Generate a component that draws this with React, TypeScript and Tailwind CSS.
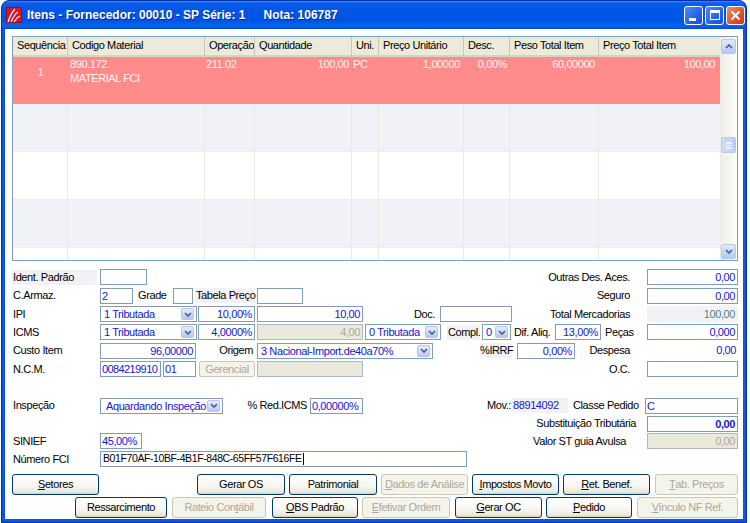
import React from 'react';

type P = { className?: string; children?: React.ReactNode };

// label text, no border
const Lbl = ({ className = '', children }: P) => (
  <div className={`h-[15px] shrink-0 whitespace-nowrap leading-[15px] ${className}`}>{children}</div>
);

// edit box
const Field = ({ className = '', children, right, disabled }: P & { right?: boolean; disabled?: boolean }) => (
  <div
    className={`h-[16px] shrink-0 overflow-hidden whitespace-nowrap border leading-[14px] ${
      disabled ? 'border-[#a9b8cc] bg-[#ebe9db] text-[#aca899]' : 'border-[#7f9db9] bg-white text-[#1616d0]'
    } ${right ? 'pr-[2px] text-right' : 'pl-[1px]'} ${className}`}
  >
    {children}
  </div>
);

const Chevron = ({ up }: { up?: boolean }) => (
  <svg width="8" height="5" viewBox="0 0 8 5">
    <path d={up ? 'M1 4l3-3 3 3' : 'M1 1l3 3 3-3'} fill="none" stroke="#4d6185" strokeWidth="1.7" />
  </svg>
);

// combobox with XP arrow button
const Combo = ({ className = '', children, textClass = 'pl-[3px]' }: P & { textClass?: string }) => (
  <div className={`flex h-[16px] shrink-0 items-center border border-[#7f9db9] bg-white ${className}`}>
    <span className={`flex-1 overflow-hidden whitespace-nowrap leading-[14px] text-[#1616d0] ${textClass}`}>{children}</span>
    <span className="mr-[2px] flex h-[12px] w-[13px] shrink-0 items-center justify-center rounded-[2px] border border-[#b2c6f2] bg-[linear-gradient(180deg,#e6eefe_0%,#c8d8fb_60%,#b4c8f5_100%)]">
      <Chevron />
    </span>
  </div>
);

const Btn = ({ className = '', children, disabled }: P & { disabled?: boolean }) => (
  <button
    type="button"
    className={`flex h-[21px] shrink-0 items-center justify-center whitespace-nowrap rounded-[3px] border ${
      disabled
        ? 'border-[#c9c7ba] bg-[#f5f4ea] text-[#aca899]'
        : 'border-[#003c74] bg-[linear-gradient(180deg,#ffffff_0%,#f8f7f3_55%,#e5e2d7_100%)] text-black shadow-[inset_0_-1px_0_#d6d0c5]'
    } ${className}`}
  >
    {children}
  </button>
);

const U = ({ children }: P) => <span className="underline underline-offset-[1px]">{children}</span>;

const cols = 'grid grid-cols-[55px_137px_50px_97px_27px_85px_46px_89px_122px]';
const heads = ['Sequência', 'Codigo Material', 'Operação', 'Quantidade', 'Uni.', 'Preço Unitário', 'Desc.', 'Peso Total Item', 'Preço Total Item'];
const emptyRows = ['bg-[#f1f2f7]', 'bg-white', 'bg-[#f1f2f7]', 'bg-white', 'bg-[#f1f2f7]'];

const AppIcon = () => (
  <svg width="16" height="16" viewBox="0 0 16 16">
    <rect x="0.5" y="0.5" width="15" height="15" fill="#d8142c" stroke="#9a0a18" />
    <path d="M2 15 C4 9 6 5 9 2 M5 15 C7 10 9 7 12 5 M8 15 C10 12 11 10 14 9" fill="none" stroke="#fff" strokeWidth="1.2" />
  </svg>
);

const ItemsGrid = () => (
  <div className="flex h-[225px] border border-[#7f9db9] bg-white">
    <div className="flex w-[708px] flex-col overflow-hidden">
      <div className={`${cols} h-[20px] shrink-0 border-b-[2px] border-[#d6d3c4] bg-[#ebeadb]`}>
        {heads.map((h) => (
          <div key={h} className="overflow-hidden whitespace-nowrap border-r border-[#c9c6b6] pl-[4px] leading-[17px] text-black">
            {h}
          </div>
        ))}
      </div>
      <div className={`${cols} h-[47px] shrink-0 bg-[#ff8b8b] leading-[14px] text-[#fff0f0]`}>
        <div className="pt-[8px] text-center">1</div>
        <div className="pl-[2px]">
          890.172.
          <br />
          MATERIAL FCI
        </div>
        <div className="pl-[1px]">211.02</div>
        <div className="pr-[3px] text-right">100,00</div>
        <div className="pl-[1px]">PC</div>
        <div className="pr-[4px] text-right">1,00000</div>
        <div className="pr-[3px] text-right">0,00%</div>
        <div className="pr-[4px] text-right">60,00000</div>
        <div className="pr-[6px] text-right">100,00</div>
      </div>
      {emptyRows.map((bg, i) => (
        <div key={i} className={`${cols} h-[48px] shrink-0 border-b border-[#eeece4] ${bg}`}>
          {heads.map((h) => (
            <div key={h} className="border-r border-[#ebe9df]" />
          ))}
        </div>
      ))}
    </div>
    {/* scrollbar */}
    <div className="flex w-[17px] flex-col items-center bg-[linear-gradient(90deg,#eeede5_0%,#f7f6f1_60%,#fdfdfb_100%)]">
      <div className="mt-[2px] flex h-[15px] w-[15px] items-center justify-center rounded-[2px] border border-[#b4c8f4] bg-[linear-gradient(180deg,#e1eafe_0%,#c5d6fb_60%,#b2c6f5_100%)]">
        <Chevron up />
      </div>
      <div className="mt-[83px] flex h-[16px] w-[15px] items-center justify-center rounded-[2px] border border-[#b4c8f4] bg-[linear-gradient(90deg,#cfdcfd_0%,#bccffa_100%)]">
        <div className="h-[7px] w-[6px] border-y border-[#eef3fe] bg-[repeating-linear-gradient(180deg,#eef3fe_0px,#eef3fe_1px,transparent_1px,transparent_2px)]" />
      </div>
      <div className="flex-1" />
      <div className="mb-[1px] flex h-[15px] w-[15px] items-center justify-center rounded-[2px] border border-[#b4c8f4] bg-[linear-gradient(180deg,#e1eafe_0%,#c5d6fb_60%,#b2c6f5_100%)]">
        <Chevron />
      </div>
    </div>
  </div>
);

export default function App() {
  return (
    <div className="h-[523px] w-[750px] overflow-hidden bg-white font-['Liberation_Sans',Arial,sans-serif] text-[11px] tracking-[-0.4px] text-black">
      <div className="ml-[1px] flex h-[523px] w-[746px] flex-col rounded-t-[8px] border border-[#0831b0] bg-[#0a56e2]">
        {/* title bar */}
        <div className="flex h-[28px] shrink-0 items-center rounded-t-[7px] bg-[linear-gradient(180deg,#3c8cf7_0%,#0b5fea_7%,#0256e6_30%,#0054e3_70%,#0863ed_90%,#0447cf_100%)] pl-[4px] pr-[1px]">
          <AppIcon />
          <span className="ml-[5px] text-[12px] font-bold tracking-normal text-white [text-shadow:1px_1px_0_#0a2a90]">
            Itens - Fornecedor: 00010 - SP Série: 1
          </span>
          <span className="ml-[18px] text-[12px] font-bold tracking-normal text-white [text-shadow:1px_1px_0_#0a2a90]">
            Nota: 106787
          </span>
          <div className="ml-auto flex gap-[2px]">
            <div className="flex h-[19px] w-[19px] items-end rounded-[3px] border border-white bg-[linear-gradient(135deg,#4a8cf8_0%,#2663e9_60%,#1b4fd6_100%)] pb-[3px] pl-[4px]">
              <div className="h-[3px] w-[7px] bg-white" />
            </div>
            <div className="flex h-[19px] w-[19px] items-center justify-center rounded-[3px] border border-white bg-[linear-gradient(135deg,#4a8cf8_0%,#2663e9_60%,#1b4fd6_100%)]">
              <div className="h-[10px] w-[10px] border border-t-[3px] border-white" />
            </div>
            <div className="flex h-[19px] w-[19px] items-center justify-center rounded-[3px] border border-white bg-[linear-gradient(135deg,#f0906e_0%,#e2532f_55%,#c63a1c_100%)]">
              <svg width="11" height="11" viewBox="0 0 11 11">
                <path d="M1.5 1.5l8 8M9.5 1.5l-8 8" stroke="#fff" strokeWidth="2" />
              </svg>
            </div>
          </div>
        </div>

        {/* client area */}
        <div className="mx-[3px] mb-[3px] flex flex-1 flex-col bg-white pl-[7px] pr-[5px] pt-[7px]">
          <ItemsGrid />

          <div className="mt-[7px] flex h-[18px] items-center">
            <Lbl className="w-[85px] bg-[#f1f1f6] pl-[1px]">Ident. Padrão</Lbl>
            <Field className="ml-[3px] w-[47px]" />
            <Lbl className="ml-auto">Outras Des. Aces.</Lbl>
            <Field right className="ml-[17px] w-[91px]">0,00</Field>
          </div>

          <div className="flex h-[19px] items-center">
            <Lbl className="w-[88px] pl-[1px]">C.Armaz.</Lbl>
            <Field className="w-[33px]">2</Field>
            <Lbl className="ml-[5px] w-[35px]">Grade</Lbl>
            <Field className="w-[20px]" />
            <Lbl className="ml-[2px] w-[60px] bg-[#f1f1f6] pl-[1px]">Tabela Preço</Lbl>
            <Field className="ml-[2px] w-[46px]" />
            <Lbl className="ml-auto">Seguro</Lbl>
            <Field right className="ml-[17px] w-[91px]">0,00</Field>
          </div>

          <div className="flex h-[18px] items-center">
            <Lbl className="w-[88px] pl-[1px]">IPI</Lbl>
            <Combo className="w-[97px]">1 Tributada</Combo>
            <Field right className="ml-[1px] w-[57px]">10,00%</Field>
            <Field right className="ml-[2px] w-[106px]">10,00</Field>
            <Lbl className="w-[77px] pr-[5px] text-right">Doc.</Lbl>
            <Field className="w-[72px]" />
            <Lbl className="ml-auto">Total Mercadorias</Lbl>
            <div className="ml-[17px] h-[16px] w-[91px] bg-[#f1f1f6] pr-[3px] text-right leading-[16px] text-[#4f8282]">100,00</div>
          </div>

          <div className="flex h-[18px] items-center">
            <Lbl className="w-[88px] pl-[1px]">ICMS</Lbl>
            <Combo className="w-[97px]">1 Tributada</Combo>
            <Field right className="ml-[1px] w-[57px]">4,0000%</Field>
            <Field right disabled className="ml-[2px] w-[106px]">4,00</Field>
            <Combo className="ml-[2px] w-[76px]">0 Tributada</Combo>
            <Lbl className="ml-[6px] w-[33px] bg-[#f1f1f6] pl-[1px]">Compl.</Lbl>
            <Combo className="ml-[2px] w-[29px]">0</Combo>
            <Lbl className="ml-[2px] w-[42px] pl-[1px]">Dif. Aliq.</Lbl>
            <Field right className="w-[46px]">13,00%</Field>
            <Lbl className="ml-[4px]">Peças</Lbl>
            <Field right className="ml-auto w-[91px]">0,000</Field>
          </div>

          <div className="flex h-[19px] items-center">
            <Lbl className="w-[88px] pl-[1px]">Custo Item</Lbl>
            <Field right className="w-[96px]">96,00000</Field>
            <Lbl className="w-[61px] pr-[4px] text-right">Origem</Lbl>
            <Combo className="w-[176px]">3 Nacional-Import.de40a70%</Combo>
            <Lbl className="ml-[47px] w-[32px] bg-[#f1f1f6] text-right">%IRRF</Lbl>
            <Field right className="ml-[5px] w-[58px]">0,00%</Field>
            <Lbl className="ml-auto">Despesa</Lbl>
            <div className="ml-[17px] w-[91px] pr-[2px] text-right text-[#1616d0]">0,00</div>
          </div>

          <div className="flex h-[18px] items-center">
            <Lbl className="w-[88px] pl-[1px]">N.C.M.</Lbl>
            <Field className="w-[61px] tracking-[-0.6px]">0084219910</Field>
            <Field className="ml-[2px] w-[33px]">01</Field>
            <div className="ml-[3px] flex h-[16px] w-[56px] shrink-0 items-center justify-center rounded-[2px] border border-[#c9c7ba] bg-[#f5f4ea] text-[#aca899]">
              Gerencial
            </div>
            <Field disabled className="ml-[2px] w-[106px]" />
            <Lbl className="ml-auto">O.C.</Lbl>
            <Field className="ml-[17px] w-[91px]" />
          </div>

          <div className="mt-[18px] flex h-[19px] items-center">
            <Lbl className="w-[88px] pl-[1px]">Inspeção</Lbl>
            <Combo className="w-[123px]" textClass="pl-[5px]">Aquardando Inspeção</Combo>
            <Lbl className="w-[87px] pr-[3px] text-right">% Red.ICMS</Lbl>
            <Field className="w-[53px]">0,00000%</Field>
            <Lbl className="w-[149px] pr-[1px] text-right">Mov.:</Lbl>
            <Lbl className="w-[56px] bg-[#f1f1f6] pl-[1px] text-[#1616d0]">88914092</Lbl>
            <Lbl className="ml-[5px]">Classe Pedido</Lbl>
            <Field className="ml-auto w-[93px]">C</Field>
          </div>

          <div className="flex h-[17px] items-center">
            <Lbl className="ml-auto">Substituição Tributária</Lbl>
            <Field right className="ml-[11px] w-[91px] font-bold">0,00</Field>
          </div>

          <div className="flex h-[18px] items-center">
            <Lbl className="w-[88px] pl-[1px]">SINIEF</Lbl>
            <Field className="w-[42px]">45,00%</Field>
            <Lbl className="ml-auto">Valor ST guia Avulsa</Lbl>
            <Field right disabled className="ml-[21px] w-[91px]">0,00</Field>
          </div>

          <div className="flex h-[18px] items-center">
            <Lbl className="w-[88px] pl-[1px]">Número FCI</Lbl>
            <div className="flex h-[16px] w-[367px] shrink-0 items-center border border-[#7f9db9] bg-white px-[2px] text-[10.5px] text-black">
              <span className="whitespace-nowrap">B01F70AF-10BF-4B1F-848C-65FF57F616FE</span>
              <span className="ml-[1px] h-[12px] w-[1px] bg-black" />
            </div>
          </div>

          <div className="mt-[6px] flex">
            <Btn className="w-[87px]"><U>S</U>etores</Btn>
            <Btn className="ml-[98px] w-[88px]">Gerar OS</Btn>
            <Btn className="ml-[4px] w-[88px]">Patrimonial</Btn>
            <Btn disabled className="ml-[4px] w-[87px]"><U>D</U>ados de Análise</Btn>
            <Btn className="ml-[4px] w-[87px]"><U>I</U>mpostos Movto</Btn>
            <Btn className="ml-[4px] w-[87px]"><U>R</U>et. Benef.</Btn>
            <Btn disabled className="ml-[5px] w-[83px]"><U>T</U>ab. Preços</Btn>
          </div>
          <div className="mt-[2px] flex">
            <Btn className="ml-[63px] w-[92px]">Ressarcimento</Btn>
            <Btn disabled className="ml-[5px] w-[94px]">Rateio Con<U>t</U>ábil</Btn>
            <Btn className="ml-[6px] w-[86px]"><U>O</U>BS Padrão</Btn>
            <Btn disabled className="ml-[4px] w-[88px]"><U>E</U>fetivar Ordem</Btn>
            <Btn className="ml-[5px] w-[87px]"><U>G</U>erar OC</Btn>
            <Btn className="ml-[4px] w-[86px]"><U>P</U>edido</Btn>
            <Btn disabled className="ml-[5px] w-[101px]"><U>V</U>ínculo NF Ref.</Btn>
          </div>
        </div>
      </div>
    </div>
  );
}
